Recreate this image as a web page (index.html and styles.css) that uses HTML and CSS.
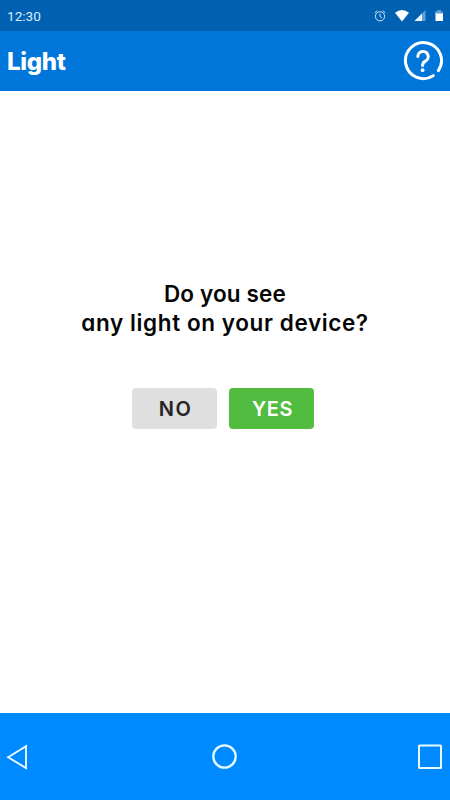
FILE: index.html
```html
<!DOCTYPE html>
<html lang="en">
<head>
    <meta charset="UTF-8">
    <meta name="viewport" content="width=device-width, initial-scale=1.0">
    <title>Light</title>
    <link rel="stylesheet" href="styles.css">
</head>
<body>
    <div class="status-bar">
        <span class="time">12:30</span>
        <svg class="status-icons" width="72" height="16" viewBox="0 0 72 16">
            <g fill="none" stroke="#cfe6fa" stroke-width="1">
                <circle cx="9" cy="8.3" r="4.6"/>
                <path d="M9 5.5v3l2 1.3M3.6 5l2.6-2.4M14.4 5l-2.6-2.4"/>
            </g>
            <path d="M24 4.8Q31 -.8 38 4.8L31 13.5Z" fill="#fff"/>
            <path d="M54.5 2v11H43.5Z" fill="#5d9fdb"/>
            <path d="M51 5.6V13h-7.5Z" fill="#e8f5ff"/>
            <path d="M66 2h4v1.5h2V6h-8V3.5h2Z" fill="#5d9fdb"/>
            <path d="M64.5 5.5h7.5V13h-7.5Z" fill="#fff"/>
        </svg>
    </div>

    <header class="header">
        <h1 class="title">Light</h1>
        <svg class="help" width="40" height="40" viewBox="0 0 40 40" fill="none" stroke="#fff" stroke-linecap="round">
            <path d="M30.2 34.7A18 18 0 1 1 35.4 29.6" stroke-width="3"/>
            <path d="M14.8 15.6a5.2 5.2 0 1 1 7.6 4.6q-2.8 1.4-2.8 4.4" stroke-width="3"/>
            <circle cx="19.6" cy="29.2" r="1.9" fill="#fff" stroke="none"/>
        </svg>
    </header>

    <main class="content">
        <p class="question"><span class="line-1">Do you see</span><br><span class="line-2">any light on your device?</span></p>
        <div class="buttons">
            <button class="btn btn-no">NO</button>
            <button class="btn btn-yes">YES</button>
        </div>
    </main>

    <nav class="nav-bar">
        <svg width="28" height="28" viewBox="0 0 28 28" fill="none" stroke="#e9fbff" stroke-width="1.9">
            <path d="M26 3.3v21.8L8.2 14.2Z"/>
        </svg>
        <svg class="home" width="28" height="28" viewBox="0 0 28 28" fill="none" stroke="#e9fbff" stroke-width="2.3">
            <circle cx="13.5" cy="13.5" r="11.2"/>
        </svg>
        <svg width="28" height="28" viewBox="0 0 28 28" fill="none" stroke="#e9fbff" stroke-width="2">
            <rect x="3" y="2.5" width="22" height="22.5" rx=".5"/>
        </svg>
    </nav>
</body>
</html>
```

FILE: styles.css
```css
body {
    margin: 0;
    height: 800px;
    display: flex;
    flex-direction: column;
    overflow: hidden;
    background: #fff;
    font-family: Inter, "Liberation Sans", sans-serif;
    font-feature-settings: "cv11";
}

.status-bar {
    height: 31px;
    padding: 0 7px;
    display: flex;
    align-items: center;
    justify-content: space-between;
    background: #0061b2;
}

.time {
    font-family: Roboto, sans-serif;
    font-size: 13.6px;
    color: #d9ecfc;
}

/* header */
.header {
    height: 60px;
    padding: 0 7px;
    display: flex;
    align-items: center;
    justify-content: space-between;
    background: #0075da;
}

.title {
    margin: 0;
    font-size: 24px;
    font-weight: 800;
    letter-spacing: -0.3px;
    color: #fff;
}

/* question */
.content {
    flex: 1;
    display: flex;
    flex-direction: column;
    align-items: center;
}

.question {
    margin: 188px 0 0;
    font-size: 22.5px;
    font-weight: 600;
    line-height: 29px;
    text-align: center;
    white-space: nowrap;
    color: #050505;
}

.line-1 {
    letter-spacing: 0.15px;
}

.line-2 {
    letter-spacing: 0.6px;
}

.buttons {
    margin: 51px 0 0 -4px;
    display: flex;
    gap: 12px;
}

.btn {
    width: 85px;
    height: 41px;
    padding: 0 0 0 2px;
    border: none;
    border-radius: 4px;
    font: 600 20px Inter, "Liberation Sans", sans-serif;
}

.btn-no {
    background: #dfdfdf;
    color: #252525;
    letter-spacing: 1.5px;
}

.btn-yes {
    background: #52bc40;
    color: #fff;
    letter-spacing: 0.6px;
}

/* bottom navigation */
.nav-bar {
    height: 87px;
    display: grid;
    grid-template-columns: 1fr 28px 1fr;
    align-items: center;
    background: #008aff;
}

.nav-bar svg:last-child {
    justify-self: end;
    margin-right: 6px;
}
```
